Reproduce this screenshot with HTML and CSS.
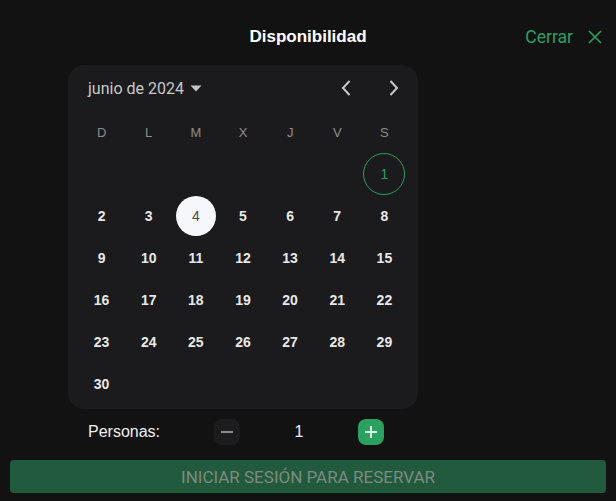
FILE: index.html
```html
<!DOCTYPE html>
<html lang="es">
<head>
<meta charset="utf-8">
<title>Disponibilidad</title>
<link rel="stylesheet" href="styles.css">
</head>
<body>
<div class="page">
  <header class="topbar">
    <div></div>
    <h1 class="title">Disponibilidad</h1>
    <button class="close">
      <span>Cerrar</span>
      <svg width="14" height="14" viewBox="0 0 14 14"><path d="M1 1L13 13M13 1L1 13" stroke="#2e9e62" stroke-width="1.6" fill="none"/></svg>
    </button>
  </header>

  <section class="calendar">
    <div class="cal-head">
      <div class="month">junio de 2024
        <svg class="caret" width="12" height="7" viewBox="0 0 12 7"><path d="M0.5 0.5H11.5L6 6.5Z" fill="#c4c4c4"/></svg>
      </div>
      <div class="nav">
        <button class="navbtn"><svg width="10" height="16" viewBox="0 0 10 16"><path d="M8.5 1L2 8L8.5 15" stroke="#c8c8c8" stroke-width="2" fill="none"/></svg></button>
        <button class="navbtn"><svg width="10" height="16" viewBox="0 0 10 16"><path d="M1.5 1L8 8L1.5 15" stroke="#c8c8c8" stroke-width="2" fill="none"/></svg></button>
      </div>
    </div>
    <div class="grid">
      <div class="wd">D</div><div class="wd">L</div><div class="wd">M</div><div class="wd">X</div><div class="wd">J</div><div class="wd">V</div><div class="wd">S</div>
      <div></div><div></div><div></div><div></div><div></div><div></div><div class="day"><span class="today">1</span></div>
      <div class="day"><span>2</span></div><div class="day"><span>3</span></div><div class="day"><span class="sel">4</span></div><div class="day"><span>5</span></div><div class="day"><span>6</span></div><div class="day"><span>7</span></div><div class="day"><span>8</span></div>
      <div class="day"><span>9</span></div><div class="day"><span>10</span></div><div class="day"><span>11</span></div><div class="day"><span>12</span></div><div class="day"><span>13</span></div><div class="day"><span>14</span></div><div class="day"><span>15</span></div>
      <div class="day"><span>16</span></div><div class="day"><span>17</span></div><div class="day"><span>18</span></div><div class="day"><span>19</span></div><div class="day"><span>20</span></div><div class="day"><span>21</span></div><div class="day"><span>22</span></div>
      <div class="day"><span>23</span></div><div class="day"><span>24</span></div><div class="day"><span>25</span></div><div class="day"><span>26</span></div><div class="day"><span>27</span></div><div class="day"><span>28</span></div><div class="day"><span>29</span></div>
      <div class="day"><span>30</span></div>
    </div>
  </section>

  <div class="persons">
    <span class="plabel">Personas:</span>
    <button class="step minus"><svg width="12" height="2" viewBox="0 0 12 2"><rect width="12" height="2" fill="#8a8a8a"/></svg></button>
    <span class="count">1</span>
    <button class="step plus"><svg width="12" height="12" viewBox="0 0 12 12"><path d="M6 0V12M0 6H12" stroke="#d8efe2" stroke-width="2"/></svg></button>
  </div>

  <button class="reserve">INICIAR SESIÓN PARA RESERVAR</button>
</div>
</body>
</html>
```

FILE: styles.css
```css
* { box-sizing: border-box; }
html, body { margin: 0; padding: 0; }
body {
  background: #121212;
  width: 616px;
  height: 501px;
  overflow: hidden;
  font-family: "Liberation Sans", Arial, sans-serif;
}
button {
  border: none;
  background: none;
  padding: 0;
  margin: 0;
  font: inherit;
  cursor: pointer;
}
.page {
  display: flex;
  flex-direction: column;
}
.topbar {
  display: grid;
  grid-template-columns: 1fr auto 1fr;
  align-items: center;
  padding: 26px 14px 0 14px;
  height: 48px;
}
.title {
  margin: 0;
  font-size: 17px;
  font-weight: bold;
  color: #ffffff;
  line-height: 22px;
}
.close {
  justify-self: end;
  display: flex;
  align-items: center;
  gap: 15px;
  font-family: Roboto, sans-serif;
  font-size: 17.5px;
  color: #2e9e62;
  line-height: 22px;
}
.close svg { display: block; }
.calendar {
  margin: 17px 0 0 68px;
  width: 350px;
  background: #1b1b1d;
  border-radius: 16px;
  padding: 0 10px 4px 10px;
}
.cal-head {
  height: 46px;
  display: flex;
  align-items: center;
  justify-content: space-between;
  padding: 0 0 0 10px;
}
.month {
  display: flex;
  align-items: center;
  gap: 6px;
  font-family: Roboto, sans-serif;
  font-size: 16px;
  color: #c8c8c8;
}
.caret { display: block; margin-top: 1px; }
.nav {
  display: flex;
  gap: 16px;
  margin-right: -2px;
}
.navbtn {
  width: 32px;
  height: 32px;
  display: flex;
  align-items: center;
  justify-content: center;
}
.navbtn svg { display: block; }
.grid {
  display: grid;
  grid-template-columns: repeat(7, 1fr);
  grid-auto-rows: 42px;
}
.wd {
  display: flex;
  align-items: center;
  justify-content: center;
  font-size: 13px;
  color: #8c8c8c;
}
.day {
  display: flex;
  align-items: center;
  justify-content: center;
}
.day span {
  width: 42px;
  height: 42px;
  border-radius: 50%;
  display: flex;
  align-items: center;
  justify-content: center;
  font-size: 14px;
  font-weight: bold;
  color: #e8e8e8;
}
.day .today {
  border: 1px solid #2a9d5f;
  color: #2a9d5f;
  font-weight: normal;
}
.day .sel {
  width: 40px;
  height: 40px;
  background: #f6f7fb;
  color: #4a4a4a;
  font-weight: normal;
}
.persons {
  margin: 10px 0 0 88px;
  height: 26px;
  display: flex;
  align-items: center;
}
.plabel {
  width: 126px;
  font-size: 16px;
  color: #f0f0f0;
}
.step {
  width: 26px;
  height: 26px;
  border-radius: 8px;
  display: flex;
  align-items: center;
  justify-content: center;
}
.step svg { display: block; }
.minus { background: #1c1c1e; }
.plus { background: #2aa062; }
.count {
  width: 118px;
  text-align: center;
  font-size: 16px;
  color: #f0f0f0;
}
.reserve {
  margin: 15px 10px 0 10px;
  height: 33px;
  background: #215a3c;
  border-radius: 4px;
  font-family: Roboto, sans-serif;
  font-size: 17px;
  color: #7d8b82;
  text-align: center;
}
```
